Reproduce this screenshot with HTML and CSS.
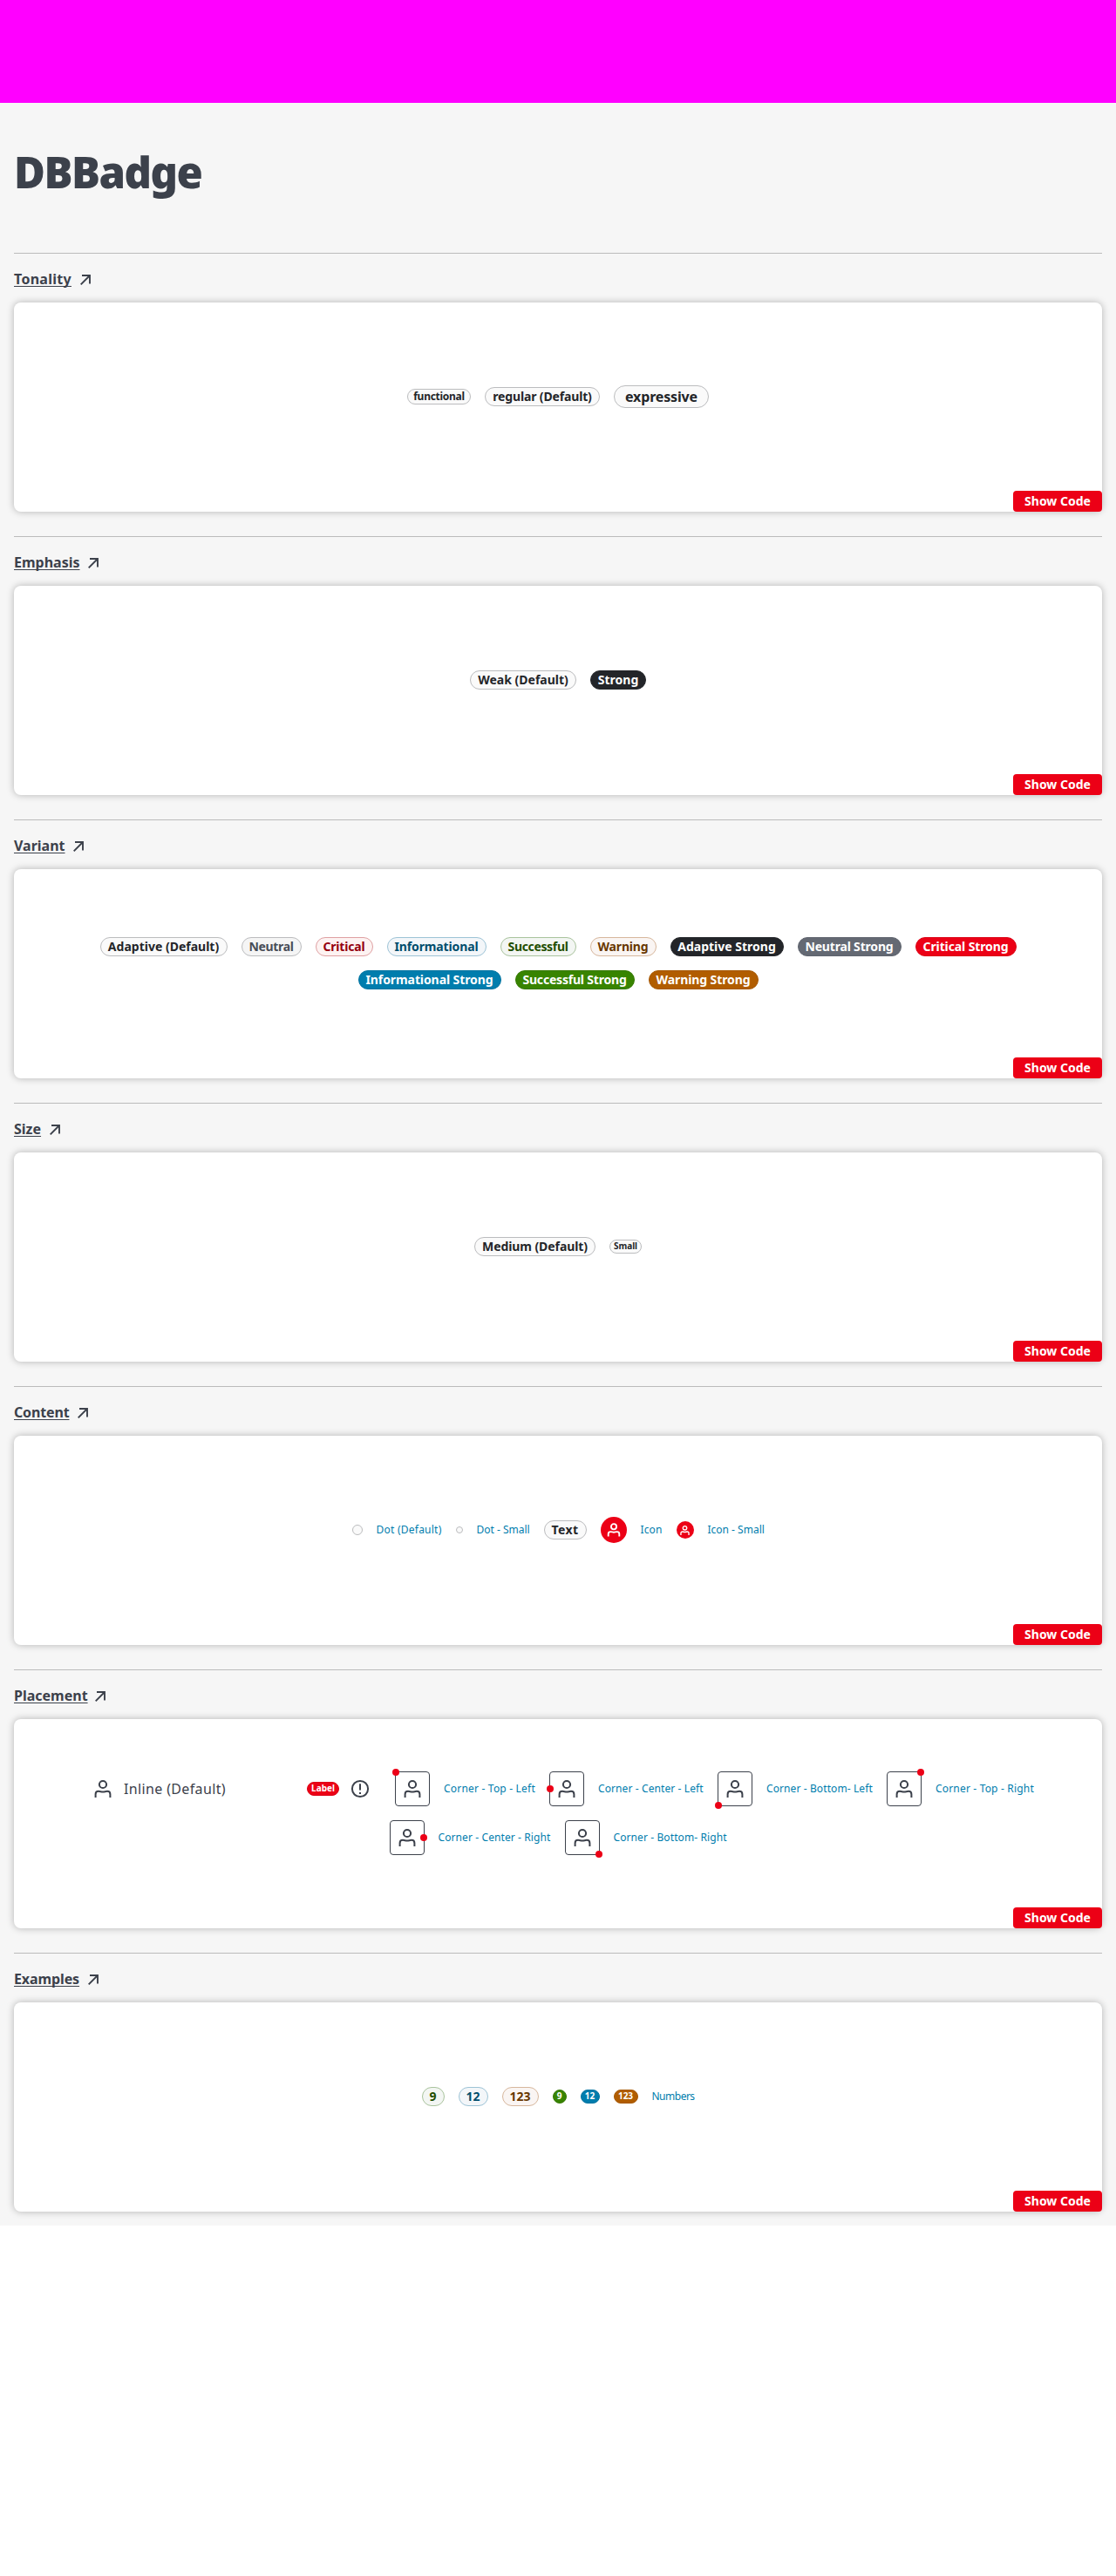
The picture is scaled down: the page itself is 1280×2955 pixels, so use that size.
FILE: index.html
```
<!DOCTYPE html>
<html lang="en">
<head>
<meta charset="utf-8">
<title>DBBadge</title>
<link rel="stylesheet" href="styles.css">
</head>
<body>
<svg class="sprite" width="0" height="0" aria-hidden="true">
  <symbol id="arrow" viewBox="0 0 12 12"><path d="M2 1H11V10.5M11 1L.7 11.3" fill="none" stroke="currentColor" stroke-width="1.9"/></symbol>
  <symbol id="person" viewBox="0 0 24 24"><g fill="none" stroke="currentColor"><circle cx="12" cy="7" r="4.1"/><path d="M3.6 22V18.2Q3.6 14.8 7 14.8C9 14.8 10 15.6 12 15.6S15 14.8 17 14.8Q20.4 14.8 20.4 18.2V22"/></g></symbol>
  <symbol id="alert" viewBox="0 0 24 24"><circle cx="12" cy="12" r="9.1" fill="none" stroke="currentColor"/><path d="M12 6.3V13.6M12 16V18" fill="none" stroke="currentColor"/></symbol>
</svg>
<header class="topbar"></header>
<main class="page">
  <h1 class="title">DBBadge</h1>

  <section class="section">
    <a class="link t-tonality">Tonality</a><svg class="arrow"><use href="#arrow"/></svg>
    <div class="card"><div class="row">
      <span class="badge functional">functional</span>
      <span class="badge regular">regular (Default)</span>
      <span class="badge expressive">expressive</span>
    </div><button class="code">Show Code</button></div>
  </section>

  <section class="section">
    <a class="link t-emphasis">Emphasis</a><svg class="arrow"><use href="#arrow"/></svg>
    <div class="card"><div class="row">
      <span class="badge weak">Weak (Default)</span>
      <span class="badge strong-only adaptive-strong">Strong</span>
    </div><button class="code">Show Code</button></div>
  </section>

  <section class="section">
    <a class="link t-variant">Variant</a><svg class="arrow"><use href="#arrow"/></svg>
    <div class="card"><div class="row">
      <span class="badge v-adaptive">Adaptive (Default)</span>
      <span class="badge neutral v-neutral">Neutral</span>
      <span class="badge critical v-critical">Critical</span>
      <span class="badge informational v-informational">Informational</span>
      <span class="badge successful v-successful">Successful</span>
      <span class="badge warning v-warning">Warning</span>
      <span class="badge adaptive-strong v-adaptive-strong">Adaptive Strong</span>
      <span class="badge neutral-strong v-neutral-strong">Neutral Strong</span>
      <span class="badge critical-strong v-critical-strong">Critical Strong</span>
      <span class="badge informational-strong v-informational-strong">Informational Strong</span>
      <span class="badge successful-strong v-successful-strong">Successful Strong</span>
      <span class="badge warning-strong v-warning-strong">Warning Strong</span>
    </div><button class="code">Show Code</button></div>
  </section>

  <section class="section">
    <a class="link t-size">Size</a><svg class="arrow"><use href="#arrow"/></svg>
    <div class="card"><div class="row">
      <span class="badge medium">Medium (Default)</span>
      <span class="badge small s-small">Small</span>
    </div><button class="code">Show Code</button></div>
  </section>

  <section class="section">
    <a class="link t-content">Content</a><svg class="arrow"><use href="#arrow"/></svg>
    <div class="card"><div class="row">
      <span class="badge dot"></span><span class="label l-dot">Dot (Default)</span>
      <span class="badge dot dot-small"></span><span class="label l-dot-small">Dot - Small</span>
      <span class="badge text-badge">Text</span>
      <span class="round"><svg><use href="#person"/></svg></span><span class="label l-icon">Icon</span>
      <span class="round round-small"><svg><use href="#person"/></svg></span><span class="label l-icon-small">Icon - Small</span>
    </div><button class="code">Show Code</button></div>
  </section>

  <section class="section">
    <a class="link t-placement">Placement</a><svg class="arrow"><use href="#arrow"/></svg>
    <div class="card"><div class="row">
      <div class="inline-item"><svg class="icon"><use href="#person"/></svg><span class="inline-text">Inline (Default)</span><span class="badge small critical-strong label-badge">Label</span><svg class="icon"><use href="#alert"/></svg></div>
      <span class="box top-left"><svg class="icon"><use href="#person"/></svg></span><span class="label l-tl">Corner - Top - Left</span>
      <span class="box center-left"><svg class="icon"><use href="#person"/></svg></span><span class="label l-cl">Corner - Center - Left</span>
      <span class="box bottom-left"><svg class="icon"><use href="#person"/></svg></span><span class="label l-bl">Corner - Bottom- Left</span>
      <span class="box top-right"><svg class="icon"><use href="#person"/></svg></span><span class="label l-tr">Corner - Top - Right</span>
      <span class="box center-right"><svg class="icon"><use href="#person"/></svg></span><span class="label l-cr">Corner - Center - Right</span>
      <span class="box bottom-right"><svg class="icon"><use href="#person"/></svg></span><span class="label l-br">Corner - Bottom- Right</span>
    </div><button class="code">Show Code</button></div>
  </section>

  <section class="section">
    <a class="link t-examples">Examples</a><svg class="arrow"><use href="#arrow"/></svg>
    <div class="card"><div class="row">
      <span class="badge successful n-9">9</span>
      <span class="badge informational n-12">12</span>
      <span class="badge warning n-123">123</span>
      <span class="badge small successful-strong ns-9">9</span>
      <span class="badge small informational-strong ns-12">12</span>
      <span class="badge small warning-strong ns-123">123</span>
      <span class="label l-numbers">Numbers</span>
    </div><button class="code">Show Code</button></div>
  </section>
</main>
</body>
</html>
```
FILE: styles.css
```
* { box-sizing: border-box; }
body { margin: 0; background: #fff; color: #3c414b; font-family: "Noto Sans", "Open Sans", sans-serif; }
.sprite { display: block; }
.topbar { height: 118px; background: #f0f; }
.page { background: #f6f6f6; padding: 0 16px 16px; height: 2435px; }
.title { margin: 0; height: 172px; padding-top: 45px; font-size: 49px; line-height: 68px; font-weight: 900; letter-spacing: -1.5px; }

.section { height: 325px; border-top: 1px solid #bbbbbb; padding-top: 17px; display: grid; grid-template-columns: max-content 1fr; grid-template-rows: 39px 240px; column-gap: 10px; }
.link { font-size: 16px; line-height: 24px; font-weight: 700; height: 24px; white-space: nowrap; text-decoration: underline; text-decoration-thickness: 1px; text-underline-offset: 2px; text-decoration-skip-ink: none; }
.t-tonality { width: 66px; letter-spacing: .28px; }
.t-emphasis { width: 75px; }
.t-variant { width: 58px; }
.t-size { width: 31px; }
.t-content { width: 63px; letter-spacing: -.15px; }
.t-placement { width: 83px; }
.t-examples { width: 75px; letter-spacing: -.1px; }
.arrow { width: 12px; height: 12px; margin-top: 7px; }
.card { grid-column: 1 / 3; background: #fff; border-radius: 8px; box-shadow: 0 0 8px rgba(0, 0, 0, .28); display: flex; flex-direction: column; }
.row { height: 216px; padding: 0 78px; display: flex; flex-wrap: wrap; gap: 16px; justify-content: center; align-items: center; align-content: center; }
.code { align-self: flex-end; width: 102px; height: 24px; padding: 0; border: 0; border-radius: 4px; background: #ec0016; color: #fff; font: 700 14px/24px "Noto Sans", sans-serif; }

.badge { height: 22px; border: 1px solid #bbbcbe; border-radius: 13px; background: #fafafa; color: #232529; font-size: 14px; line-height: 20px; font-weight: 700; text-align: center; white-space: nowrap; }
.small { height: 16px; font-size: 10px; line-height: 13px; }

.functional { width: 73px; height: 18px; font-size: 12px; line-height: 15px; letter-spacing: -.28px; }
.regular { width: 132px; letter-spacing: -.15px; }
.expressive { width: 109px; height: 26px; font-size: 16px; line-height: 24px; letter-spacing: -.15px; }
.weak { width: 122px; }
.strong-only { width: 64px; }
.medium { width: 139px; letter-spacing: -.08px; }
.s-small { width: 37px; }
.text-badge { width: 49px; letter-spacing: .4px; }

.neutral { background: #f5f5f5; color: #484d57; }
.critical { background: #fdf3f2; border-color: #dfa0a2; color: #95000f; }
.informational { background: #f3f6f9; border-color: #9dc3d6; color: #004d6c; }
.successful { background: #f3f6f3; border-color: #a9c39d; color: #1f4e00; }
.warning { background: #faf5f3; border-color: #d7b79d; color: #683700; }
.adaptive-strong { background: #232529; border-color: #232529; color: #fff; }
.neutral-strong { background: #646973; border-color: #5f646e; color: #fff; }
.critical-strong { background: #ec0016; border-color: #dc0014; color: #fff; }
.informational-strong { background: #007dad; border-color: #0073a0; color: #fff; }
.successful-strong { background: #388400; border-color: #347800; color: #fff; }
.warning-strong { background: #b15d00; border-color: #a65700; color: #fff; }

.v-adaptive { width: 146px; }
.v-neutral { width: 69px; letter-spacing: -.35px; }
.v-critical { width: 66px; letter-spacing: -.18px; }
.v-informational { width: 114px; letter-spacing: -.13px; }
.v-successful { width: 87px; letter-spacing: -.34px; }
.v-warning { width: 76px; letter-spacing: -.16px; }
.v-adaptive-strong { width: 130px; }
.v-neutral-strong { width: 119px; letter-spacing: -.18px; }
.v-critical-strong { width: 116px; letter-spacing: -.11px; }
.v-informational-strong { width: 164px; letter-spacing: -.09px; }
.v-successful-strong { width: 137px; letter-spacing: -.2px; }
.v-warning-strong { width: 126px; letter-spacing: -.09px; }

.dot { width: 12px; height: 12px; }
.dot-small { width: 8px; height: 8px; }
.round { display: flex; align-items: center; justify-content: center; width: 30px; height: 30px; border-radius: 50%; background: #ec0016; color: #fff; }
.round svg { width: 18px; height: 18px; stroke-width: 2.5; }
.round-small { width: 20px; height: 20px; }
.round-small svg { width: 13px; height: 13px; }

.label { color: #007dad; font-size: 12px; line-height: 20px; white-space: nowrap; }
.l-dot { width: 75px; letter-spacing: .24px; }
.l-dot-small { width: 61px; }
.l-icon { width: 25px; letter-spacing: .12px; }
.l-icon-small { width: 65px; }
.l-tl { width: 105px; letter-spacing: .2px; }
.l-cl { width: 121px; letter-spacing: .1px; }
.l-bl { width: 122px; letter-spacing: .1px; }
.l-tr { width: 113px; letter-spacing: .18px; }
.l-cr { width: 129px; letter-spacing: .1px; }
.l-br { width: 130px; letter-spacing: .1px; }
.l-numbers { width: 49px; letter-spacing: -.5px; }

.icon { width: 24px; height: 24px; flex: none; stroke-width: 2; }
.inline-item { width: 343px; padding-left: 12px; display: flex; align-items: center; }
.inline-text { width: 210px; margin: 0 0 0 12px; font-size: 16px; line-height: 24px; font-weight: 400; letter-spacing: .36px; white-space: nowrap; }
.label-badge { width: 37px; margin-right: 12px; }
.box { position: relative; display: flex; align-items: center; justify-content: center; width: 40px; height: 40px; border: 1px solid #3c414b; border-radius: 4px; }
.box::after { content: ""; position: absolute; width: 8px; height: 8px; border-radius: 50%; background: #ec0016; }
.top-left::after { left: -4px; top: -4px; }
.center-left::after { left: -4px; top: 15px; }
.bottom-left::after { left: -4px; bottom: -4px; }
.top-right::after { right: -4px; top: -4px; }
.center-right::after { right: -4px; top: 15px; }
.bottom-right::after { right: -4px; bottom: -4px; }

.n-9 { width: 26px; }
.n-12 { width: 34px; }
.n-123 { width: 42px; }
.ns-9 { width: 16px; }
.ns-12 { width: 22px; }
.ns-123 { width: 28px; }
```
